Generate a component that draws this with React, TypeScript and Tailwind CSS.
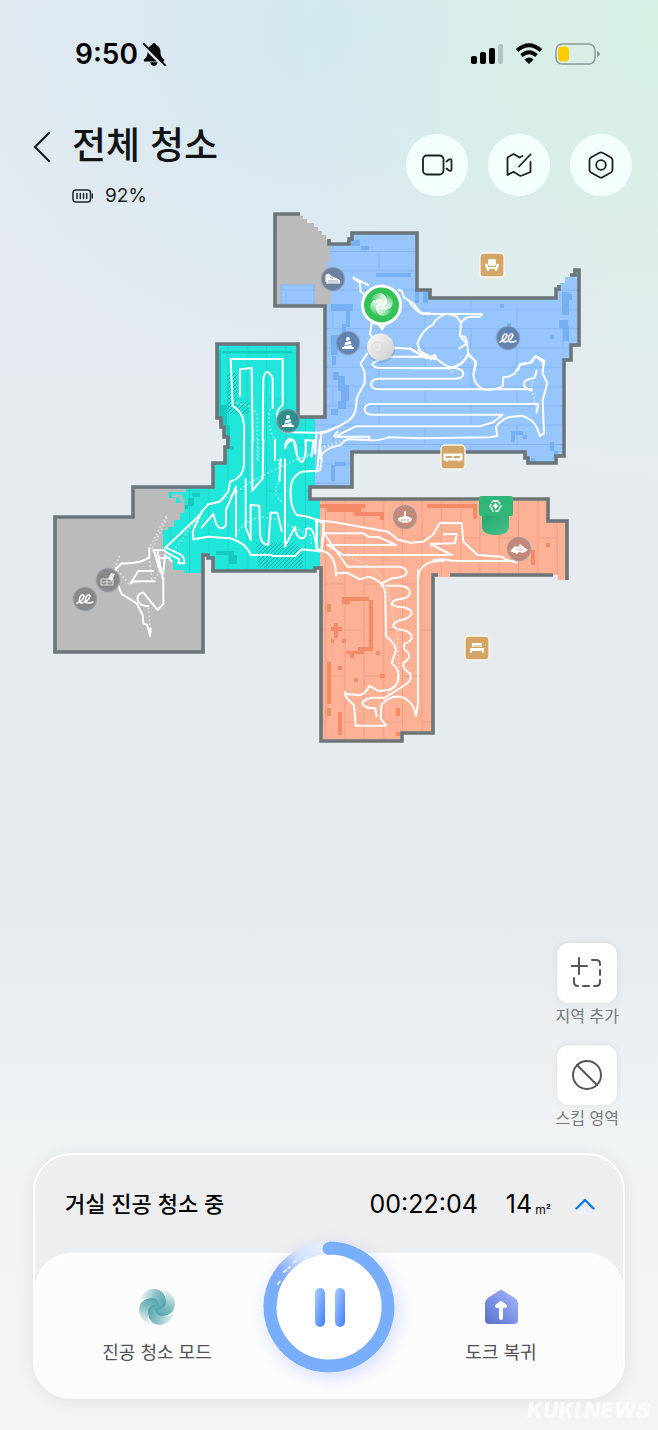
import type { ReactNode } from "react";

type Patch = [x: number, y: number, w: number, h: number];

type Tile = {
  x: number;
  y: number;
  d: string[];
  dots?: string[];
};

const BLUE_ROOM =
  "M325 244H328V240H330V244H349V239H352V233H417V290H429V298H556V289H560V283H565V277H571V275H575V270H579V345H571V360H564V457H556V463H528V458H525V452H352V487H315V417H325V306H327Z";
const GREEN_ROOM =
  "M217 344H298V417H315V487H309V499H320V568H315V571H213V557H208V553H203V573H184V570H173V560H167V551H163V530H168V527H174V520H180V513H184V503H176V498H169V492H186V489H174V487H213V463H225V447H228V437H224V427H221V418H217Z";
const ORANGE_ROOM =
  "M320 498H548V521H567V580H558V575H433V733H402V741H321V568H320Z";

const WALLS = [
  "M300 214H275V306H325V417H298V344H217V418H221V427H224V437H228V447H225V463H213V487H133V517H55V652H203V555H208V558H213V571H315V568H321V741H402V733H433V575H438",
  "M329 239V244H349V239H352V233H417V290H430V298H556V289H559V285",
  "M570 275H575V270H579V345H571V360H564V456H556V463H528V458H525V452H352V487H310V499H548V521H567V580",
  "M450 575H553",
];

const bluePatches: Patch[] = [
  [351, 240, 9, 6], [361, 246, 8, 4], [376, 273, 35, 4], [415, 291, 4, 12], [423, 292, 5, 11],
  [500, 304, 4, 4], [562, 292, 7, 23], [568, 294, 4, 6], [559, 320, 9, 8], [563, 326, 6, 15], [550, 335, 4, 4],
  [331, 304, 22, 7], [346, 311, 4, 16], [342, 324, 4, 18], [331, 335, 7, 20], [333, 372, 6, 8], [338, 376, 7, 15],
  [341, 385, 8, 16], [338, 401, 8, 8], [331, 409, 7, 6], [332, 356, 4, 9], [511, 431, 12, 4], [511, 435, 4, 7], [523, 435, 4, 4],
  [550, 442, 4, 9], [554, 451, 4, 6], [531, 458, 4, 4], [335, 462, 11, 4], [331, 465, 4, 16], [507, 323, 4, 8],
];
const greenPatches: Patch[] = [
  [223, 351, 69, 2], [217, 350, 4, 62], [219, 405, 8, 20], [226, 425, 4, 20], [230, 446, 4, 4],
  [192, 493, 8, 4], [188, 498, 6, 8], [182, 505, 6, 4], [216, 551, 18, 4], [229, 555, 8, 9],
];
const orangePatches: Patch[] = [
  [320, 504, 45, 4], [327, 508, 34, 4], [354, 512, 30, 4], [380, 514, 4, 6], [427, 504, 50, 4], [473, 508, 4, 11],
  [531, 550, 4, 15], [546, 543, 4, 4], [342, 597, 27, 4], [342, 600, 8, 4], [369, 600, 4, 51], [358, 647, 15, 4],
  [346, 651, 18, 3], [350, 654, 4, 4], [331, 627, 11, 4], [334, 623, 4, 15], [331, 639, 3, 4], [342, 639, 4, 4],
  [327, 604, 4, 8], [376, 651, 4, 4], [338, 666, 4, 4], [327, 662, 4, 42], [354, 678, 4, 4], [380, 674, 5, 4],
  [327, 708, 4, 8], [338, 712, 4, 23], [396, 708, 4, 8], [396, 732, 4, 4],
];

// Cleaning route, stored in tiles at three units per map unit
const route: Tile[] = [
  {
    x: 260,
    y: 200,
    d: [
      "M280 233L325 255M280 233L300 250L302 275L315 285M415 270L425 272L432 292L460 310L485 340H510",
      "M335 370L330 402L345 425M400 443L452 446L500 475",
    ],
  },
  {
    x: 410,
    y: 220,
    d: [
      "M0 250Q25 280 40 282H216L210 290H185Q165 290 153 308L150 348L172 375L175 405L198 425L195 450",
      "M153 308L140 290L110 281Q78 292 68 315Q40 325 22 370Q28 395 48 408L80 416Q105 438 125 442L155 430L175 405",
      "M148 385L172 370L165 350L150 348",
      "M0 385L40 410H75M0 411H70L62 418M0 445H125",
      "M325 450L330 432L360 428L377 408L403 423L398 450",
    ],
  },
  {
    x: 320,
    y: 350,
    d: [
      "M275 0L325 24L345 15L348 24M295 0L345 28M205 20H335",
      "M142 10L122 40L134 68V100Q110 140 110 150L107 180Q100 205 80 215Q60 230 40 235Q20 245 0 248",
      "M175 32Q158 35 158 43Q160 53 180 54H405Q430 58 430 70Q430 86 405 86H175Q153 88 153 102Q153 117 175 118H635",
      "M650 187L655 162H155Q134 162 134 178Q134 194 155 194H548L520 217L480 229H107L45 260H148V270",
      "M445 10L467 35L460 75Q465 110 495 120Q530 120 548 108L550 82Q570 82 585 70L600 45L635 37L648 18L670 38L668 70L682 100L668 150L672 250L660 258L652 235Q640 208 605 197L575 200Q550 202 528 230L532 258L510 262L300 265L205 262Q170 274 145 270L80 268L60 286Q10 295 0 325",
      "M650 62L645 82L620 90Q608 97 615 112L635 122",
      "M442 15Q435 40 405 50",
    ],
    dots: ["M650 62L635 105L650 185", "M130 262L70 270L0 292", "M360 35L400 68"],
  },
  {
    x: 200,
    y: 330,
    d: [
      "M92 87H248V225Q230 240 232 255Q230 305 265 307L350 308",
      "M92 87L98 228Q130 245 132 285V330",
      "M120 198V118L155 114L158 330M188 330L190 145Q200 107 218 145V235",
      "M225 390V330M256 355Q255 325 272 326Q288 328 290 365",
      "M318 370V330L340 332L335 380M350 308L345 370M365 305L358 375",
      "M350 308H375Q400 298 420 287M420 318H402L412 305",
    ],
    dots: ["M100 215L130 225Q175 235 172 265V390M210 240Q200 290 225 330", "M310 385Q380 345 420 340"],
  },
  {
    x: 120,
    y: 440,
    d: [
      "M372 0V75Q368 115 330 125L325 155L300 185L265 193L245 215L218 275L220 298L265 290L330 295Q380 310 392 345L450 344L460 348H525L545 328L600 334",
      "M245 220L135 325",
      "M397 0V152L428 115L430 0M465 0V55M482 58L478 122",
      "M495 58V320L525 260Q528 295 548 295Q560 292 558 268Q582 250 590 330",
      "M245 262L280 222L290 255Q305 275 318 255V210L348 140V290",
      "M377 118V262L392 300V195L418 197L420 285Q425 316 445 314L452 218H472L485 273",
      "M497 20Q505 -3 522 3Q530 60 545 66Q560 60 556 0",
      "M600 0L592 92L545 95Q512 110 512 150Q510 200 530 225Q575 230 592 242L590 325L605 332L612 250L590 238",
      "M582 0L585 40M600 20Q610 60 600 90L588 95",
    ],
    dots: [
      "M265 193Q330 175 380 135Q450 90 590 35",
      "M350 280Q385 230 430 232L470 238M475 60L480 120Q450 160 490 190",
      "M505 255L570 285L575 320M415 0V70",
      "M245 215L160 335M140 235L95 330",
    ],
  },
  {
    x: 40,
    y: 500,
    d: [
      "M328 145V172Q300 192 245 190L230 205L212 240L235 258L245 282L290 310L308 345L310 370L322 375L330 408L332 385",
      "M325 318Q300 320 293 300Q290 280 310 278L352 330L370 312V235L340 150L352 150L368 235",
      "M340 213H295L272 250L285 244H345",
      "M378 143L410 158Q435 165 433 190H415L418 178L385 160L370 150H345",
      "M370 220L375 165L395 183M360 175L390 172M345 160L360 215",
    ],
    dots: [
      "M238 170L225 200L265 250L340 240L370 205M328 175L335 235",
      "M325 325L332 400M378 50L330 140",
    ],
  },
  {
    x: 310,
    y: 480,
    d: [
      "M18 120L75 127L235 155L262 178L300 188L340 185L368 165L390 128L455 130L460 185L503 225L575 230L590 240L620 248",
      "M40 160H160L175 170L208 172L258 195H52",
      "M45 165L112 260H270Q292 265 290 280Q285 292 245 295L220 308",
      "M52 195L100 225H425L362 192L435 190L440 162H402",
      "M370 240L400 238L430 243H610M400 243Q325 240 324 300V360",
      "M18 120L22 212L35 212L42 130L18 120M35 212Q78 220 78 288M78 280L110 278L150 298L175 290Q205 295 218 320",
    ],
    dots: ["M115 230Q200 260 225 310L240 360", "M405 165V185M362 200L370 225"],
  },
  {
    x: 310,
    y: 570,
    d: [
      "M215 38Q225 55 226 75L228 198Q255 220 258 240L245 280Q265 295 265 315Q268 350 235 360L205 363L178 348Q165 375 145 375L105 372L110 385L132 405L137 467H228L212 445L215 405Q235 378 270 380Q310 390 318 438L324 400V0M105 366L110 385",
      "M230 47H270Q300 50 300 68Q298 85 265 88Q245 92 246 104Q260 112 280 112Q305 117 305 130Q300 147 265 152Q248 160 250 170Q260 180 280 180Q308 188 305 205Q300 215 285 220Q278 230 285 240Q298 248 298 258Q298 268 280 278Q275 295 300 310Q308 330 285 345L225 383H185Q155 390 158 402Q165 415 195 415L200 438",
    ],
    dots: ["M240 90Q250 150 262 190L268 320", "M250 350L200 420"],
  },
];

function Floor({ id, room, fill, line, vertical, x, y }: {
  id: string;
  room: string;
  fill: string;
  line: string;
  vertical?: boolean;
  x: number;
  y: number;
}) {
  return (
    <>
      <defs>
        <pattern
          id={id}
          x={x}
          y={y}
          width={vertical ? 38.6 : 92}
          height={vertical ? 92 : 38.6}
          patternUnits="userSpaceOnUse"
        >
          <path
            d={vertical ? "M.5 0V92M19.8 0V92M0 1H19M19 47H38" : "M0 .5H92M0 19.8H92M1 0V19M47 19V38"}
            stroke={line}
            fill="none"
          />
        </pattern>
      </defs>
      <path d={room} fill={fill} />
      <path d={room} fill={`url(#${id})`} />
    </>
  );
}

function Patches({ items, fill }: { items: Patch[]; fill: string }) {
  return (
    <g fill={fill}>
      {items.map(([x, y, width, height], i) => (
        <rect key={i} x={x} y={y} width={width} height={height} />
      ))}
    </g>
  );
}

function ObjectPin({ x, y, fill, children }: { x: number; y: number; fill: string; children: ReactNode }) {
  return (
    <g transform={`translate(${x} ${y})`}>
      <circle r="11.5" fill={fill} stroke="#8e98a5" strokeOpacity=".55" strokeWidth="1.6" />
      {children}
    </g>
  );
}

function FurniturePin({ x, y, children }: { x: number; y: number; children: ReactNode }) {
  return (
    <g transform={`translate(${x} ${y})`}>
      <rect x="-12" y="-12" width="24" height="24" rx="4" fill="#d3a566" stroke="#fbf6ec" strokeWidth="1.3" />
      {children}
    </g>
  );
}

const Cable = () => (
  <path
    d="M-8 4Q-2 2-1-3Q-2-6-5-2Q-7 4-3 4Q4 2 5-3Q4-6 1-2Q-1 4 3 4Q6 4 8 3"
    fill="none"
    stroke="#fff"
    strokeWidth="1.5"
    strokeLinecap="round"
  />
);

const Cone = () => (
  <path d="M-1.3-6H1.3L2-3L-2.2-2ZM-2.6-.8L2.5-2L3.3 1L-3.6 2.4ZM-4 3.3L3.6 2L4 4H6V6H-6V4H-4Z" fill="#fff" />
);

function Swirl({ id, color, className }: { id: string; color: string; className?: string }) {
  return (
    <svg viewBox="-20 -20 40 40" className={className} aria-hidden="true">
      <defs>
        <linearGradient id={id} x1="-16" y1="-12" x2="8" y2="-2" gradientUnits="userSpaceOnUse">
          <stop offset="0" stopColor={color} stopOpacity=".12" />
          <stop offset=".5" stopColor={color} stopOpacity=".65" />
          <stop offset="1" stopColor={color} />
        </linearGradient>
      </defs>
      {[0, 90, 180, 270].map((angle) => (
        <path
          key={angle}
          transform={`rotate(${angle})`}
          d="M-15-11C-10-21 9-21 9-5C9 0 4 3 0 2C1-5-4-9-10-9C-13-9-15-8-17-6Z"
          fill={`url(#${id})`}
        />
      ))}
    </svg>
  );
}

function FloorMap() {
  return (
    <svg viewBox="0 210 658 536" className="block h-auto w-full" role="img" aria-label="청소 지도">
      <defs>
        <pattern id="rug" width="4" height="4" patternUnits="userSpaceOnUse">
          <path d="M0 4L4 0" stroke="#0a8f88" strokeWidth=".7" />
        </pattern>
        <linearGradient id="dock" x1="0" y1="0" x2="1" y2="1">
          <stop offset="0" stopColor="#22a86c" />
          <stop offset="1" stopColor="#48c18a" />
        </linearGradient>
        <linearGradient id="robot" x1="0" y1="0" x2="1" y2="1">
          <stop offset="0" stopColor="#fafafa" />
          <stop offset="1" stopColor="#cbcbcb" />
        </linearGradient>
      </defs>

      <path
        d="M275 214H300V216H303V219H307V223H314V227H318V231H322V235H326V240H329V306H275ZM133 487H213V555H203V652H55V517H133Z"
        fill="#babbba"
      />
      <Floor id="wood-blue" room={BLUE_ROOM} fill="#97c6ff" line="#84b5f0" x={378} y={251} />
      <path d="M281 285H314V304H281ZM281 290H314M286 290V304" fill="#97c6ff" stroke="#84b5f0" />
      <path d="M325 240H327V246H330V262H327V270H331V304H325Z" fill="#babbba" />
      <Floor id="wood-green" room={GREEN_ROOM} fill="#20e7da" line="#1ed3c7" vertical x={189} y={490} />
      <Floor id="wood-orange" room={ORANGE_ROOM} fill="#ffb196" line="#ec9f88" vertical x={325} y={583} />
      <path d="M438 573H450V577H438Z" fill="#ffb196" />
      <Patches items={bluePatches} fill="#76aff2" />
      <Patches items={greenPatches} fill="#15c9bf" />
      <Patches items={orangePatches} fill="#f58a69" />
      <path d="M172 496H181V500H183V510H172V515H167" fill="none" stroke="#babbba" strokeWidth="3" />
      <path d="M227 373H237V402H249V414H227ZM256 543H294L303 551V568H258Z" fill="url(#rug)" />

      {WALLS.map((d) => (
        <path key={d} d={d} fill="none" stroke="#6c7579" strokeWidth="3.6" />
      ))}

      {route.map((tile) => (
        <g
          key={`${tile.x}-${tile.y}`}
          transform={`translate(${tile.x} ${tile.y}) scale(.3333)`}
          fill="none"
          stroke="#fff"
          strokeWidth="6"
          strokeLinecap="round"
          strokeLinejoin="round"
        >
          {tile.dots?.map((d) => (
            <path key={d} d={d} strokeDasharray="0 12" opacity=".5" />
          ))}
          {tile.d.map((d) => (
            <path key={d} d={d} />
          ))}
        </g>
      ))}

      <ObjectPin x={333} y={279} fill="#617590d9">
        <path d="M-7-4L-4-5L-1-2L4 0Q7 1 7 3H-7ZM-7 4H7" fill="#fff" stroke="#fff" />
        <path d="M-3-2L0 0M-5 2H5" stroke="#617590" strokeWidth=".7" />
      </ObjectPin>
      <ObjectPin x={348} y={343} fill="#5878a5d9"><Cone /></ObjectPin>
      <ObjectPin x={508} y={338} fill="#5878a5d9"><Cable /></ObjectPin>
      <ObjectPin x={288} y={421} fill="#347e7ed9"><Cone /></ObjectPin>
      <ObjectPin x={85} y={599} fill="#888"><Cable /></ObjectPin>
      <ObjectPin x={108} y={580} fill="#888">
        <path d="M-7-1H5V5H-7ZM-1-1V5M-7 2H5" fill="none" stroke="#ddd" />
        <path d="M0-1L3-7L7-6L4 1Z" fill="#eee" />
      </ObjectPin>
      <ObjectPin x={405} y={517} fill="#bd8474e6">
        <ellipse cy="2.5" rx="7" ry="3.3" fill="#fff" />
        <path d="M0-6V2" stroke="#fff" strokeWidth="2" />
        <path d="M-4 3H4" stroke="#bd8474" strokeWidth="1.2" strokeDasharray="2 1" />
      </ObjectPin>
      <ObjectPin x={519} y={549} fill="#bd8474e6">
        <path d="M-9 2L-4-3L-1-2L1-5L6-1L9 1L4 4L0 3L-2 5Z" fill="#fff" />
        <path d="M-3 0L3 2M0-1L4 1" stroke="#d9b1a7" strokeWidth=".7" />
      </ObjectPin>

      <FurniturePin x={492} y={265}>
        <path d="M-4-1V-4Q-4-6-2-6H2Q4-6 4-4V-1L3 1H-3ZM-7-1Q-5-2-4 0V2H4V0Q5-2 7-1L6 4H5V6H3V4H-3V6H-5V4H-6Z" fill="#fff" />
      </FurniturePin>
      <FurniturePin x={453} y={457}>
        <path d="M-9-3H9V3H-9ZM-6 3V5M6 3V5" fill="#fff" stroke="#fff" />
        <path d="M-7 0H7" stroke="#d3a566" strokeWidth="2" strokeDasharray="6 2" />
      </FurniturePin>
      <FurniturePin x={477} y={648}>
        <path d="M-5-5H5V-1H-5ZM-7 0H7V5H5V3H-5V5H-7Z" fill="#fff" />
        <path d="M-4-2H4" stroke="#d3a566" />
      </FurniturePin>

      <path d="M482 514H509V526Q509 535 495.500 535Q482 535 482 526Z" fill="url(#dock)" />
      <rect x="479" y="496" width="34" height="20" rx="2" fill="#31b679" />
      <path d="M493 501H498L501 506L498 511H493L490 506Z" fill="none" stroke="#fff" strokeWidth="1.4" strokeDasharray="9 1.500" />
      <path d="M495.500 502.500L497 505L499 506L497 507L495.500 509.500L494 507L492 506L494 505Z" fill="#fff" />

      <circle cx="381" cy="349" r="14" fill="#5d7da0" opacity=".28" />
      <circle cx="380.500" cy="347" r="13.500" fill="url(#robot)" />
      <circle cx="377" cy="347" r="5" fill="#e7e7e7" stroke="#d0d0d0" strokeWidth=".6" />
      <path d="M377 324L382 331L387 324Z" fill="#fff" />
      <circle cx="381.500" cy="305" r="19" fill="#32c257" stroke="#fff" strokeWidth="3" />
      <g transform="translate(369 292)">
        <svg width="25" height="25">
          <Swirl id="pin-swirl" color="#fff" />
        </svg>
      </g>
    </svg>
  );
}

function StatusBar() {
  return (
    <div className="flex h-[106px] items-start justify-between pt-9 pr-[58px] pl-[75px] text-black">
      <div className="flex h-9 items-center gap-1">
        <span className="text-[28px] leading-9 font-semibold">9:50</span>
        <svg viewBox="0 0 26 26" className="size-6" aria-hidden="true">
          <path d="M13 1Q15 1 15 3Q20 5 20 11Q20 16 24 19V21H2V19Q6 16 6 11Q6 5 11 3Q11 1 13 1ZM9 22H17Q16 26 13 26Q10 26 9 22Z" />
          <path d="M0 3L23 26" stroke="#d8e8f0" strokeWidth="3" />
          <path d="M2 2L25 25" stroke="#000" strokeWidth="2" strokeLinecap="round" />
        </svg>
      </div>
      <div className="flex h-9 items-center gap-3">
        <svg viewBox="0 0 33 22" className="h-[22px] w-[33px]" aria-hidden="true">
          <rect x="1" y="13" width="6" height="8" rx="2" />
          <rect x="10" y="9" width="6" height="12" rx="2" />
          <rect x="19" y="5" width="6" height="16" rx="2" />
          <rect x="28" y="1" width="5" height="20" rx="2" fill="#b3c2c2" />
        </svg>
        <svg viewBox="0 0 28 22" className="h-[22px] w-7" aria-hidden="true">
          <path d="M2 7.500Q14-3 26 7.500M6.500 12.500Q14 6 21.500 12.500" fill="none" stroke="#000" strokeWidth="3.800" />
          <path d="M9.500 16.500Q14 12.500 18.500 16.500L14 21Z" />
        </svg>
        <svg viewBox="0 0 45 22" className="h-[22px] w-[45px]" aria-hidden="true">
          <rect x="1" y="1" width="39" height="20" rx="6" fill="none" stroke="#8b9b9a" strokeWidth="1.500" />
          <rect x="3" y="3.500" width="11" height="15" rx="4" fill="#ffcc02" />
          <path d="M42 8Q45 9 45 11Q45 13 42 14Z" fill="#8b9b9a" />
        </svg>
      </div>
    </div>
  );
}

function RoundButton({ label, children }: { label: string; children: ReactNode }) {
  return (
    <button type="button" aria-label={label} className="flex size-[62px] items-center justify-center rounded-full bg-[#f2fffd]">
      <svg
        viewBox="0 0 32 32"
        className="size-8"
        fill="none"
        stroke="#1b2021"
        strokeWidth="1.800"
        strokeLinecap="round"
        strokeLinejoin="round"
        aria-hidden="true"
      >
        {children}
      </svg>
    </button>
  );
}

function Header() {
  return (
    <header className="flex items-start justify-between pr-[26px] pl-7">
      <div className="flex items-start gap-4 pt-4">
        <button type="button" aria-label="뒤로" className="flex h-[50px] w-7 items-center justify-center">
          <svg viewBox="0 0 18 32" className="h-8 w-[18px]" fill="none" stroke="#1a1c1e" strokeWidth="2.200" strokeLinecap="round" aria-hidden="true">
            <path d="M16 2L2 16L16 30" />
          </svg>
        </button>
        <div>
          <h1 className="text-[37px] leading-[48px] font-medium text-[#121416]">전체 청소</h1>
          <div className="mt-3 flex items-center gap-3">
            <svg viewBox="0 0 21 14" className="h-[14px] w-[21px]" fill="none" stroke="#222629" strokeWidth="1.500" strokeLinecap="round" aria-hidden="true">
              <rect x="1" y="1" width="17.500" height="12" rx="3" />
              <path d="M5 4.500V9.500M8.300 4.500V9.500M11.500 4.500V9.500M14.700 4.500V9.500M20.300 5V9" />
            </svg>
            <span className="text-[19px] leading-7 text-[#1c1f22]">92%</span>
          </div>
        </div>
      </div>
      <div className="flex gap-5 pt-7">
        <RoundButton label="카메라">
          <rect x="2" y="6.500" width="20.500" height="19" rx="4" />
          <path d="M25.500 12.500L28 10.500Q30.500 9.500 30.500 12V20Q30.500 22.500 28 21.500L25.500 19.500" />
        </RoundButton>
        <RoundButton label="지도 편집">
          <path d="M19.500 7L16.500 8.500L12 5.700Q10.500 4.800 9 5.800L4.500 8.500V26L10.500 22.800L16 26.300Q17.500 27.200 19 26.500L27.500 23V13M27.500 5.500L16 17.500" />
        </RoundButton>
        <RoundButton label="설정">
          <path d="M14.500 3.800Q16 3 17.500 3.800L26 8.500Q27.500 9.500 27.500 11V21Q27.500 22.500 26 23.500L17.500 28.200Q16 29 14.500 28.200L6 23.500Q4.500 22.500 4.500 21V11Q4.500 9.500 6 8.500Z" />
          <circle cx="16" cy="16" r="4.800" />
        </RoundButton>
      </div>
    </header>
  );
}

function ToolButton({ label, children }: { label: string; children: ReactNode }) {
  return (
    <button type="button" className="flex flex-col items-center text-base leading-[26px] text-[#77797c]">
      <span className="flex size-[60px] items-center justify-center rounded-xl bg-white shadow-[0_0_6px_rgba(90,110,130,0.12)]">
        <svg viewBox="0 0 32 32" className="size-8" fill="none" stroke="#55565b" strokeWidth="2" strokeLinecap="round" aria-hidden="true">
          {children}
        </svg>
      </span>
      {label}
    </button>
  );
}

function ControlPanel() {
  return (
    <section className="mx-[33px] rounded-[38px] border-2 border-white bg-[#edeeef] shadow-[0_2px_16px_rgba(60,70,80,0.1)]">
      <div className="flex h-[98px] items-center justify-between pr-7 pl-[30px] text-black">
        <h2 className="text-[22px] leading-8 font-medium">거실 진공 청소 중</h2>
        <div className="flex items-center">
          <time className="text-[25px] leading-8">00:22:04</time>
          <span className="ml-7 text-[25px] leading-8">14</span>
          <span className="mt-3 ml-[3px] text-xs">m²</span>
          <button type="button" aria-label="펼치기" className="ml-6">
            <svg viewBox="0 0 20 12" className="h-3 w-5" fill="none" stroke="#087cff" strokeWidth="2.400" strokeLinecap="round" strokeLinejoin="round" aria-hidden="true">
              <path d="M1.500 10.500L10 2L18.500 10.500" />
            </svg>
          </button>
        </div>
      </div>
      <div className="grid h-36 grid-cols-3 rounded-[36px] bg-[#fcfcfd] px-9 shadow-[inset_0_2px_0_#ffffff]">
        <button type="button" className="flex flex-col items-center pt-[34px] text-[18px] leading-7 text-[#505257]">
          <Swirl id="mode-swirl" color="#55a5ad" className="size-10" />
          <span className="mt-3 whitespace-nowrap">진공 청소 모드</span>
        </button>
        <button type="button" aria-label="일시정지" className="-mt-3 size-[132px] justify-self-center rounded-full shadow-[3px_5px_16px_rgba(80,120,255,0.22)]">
          <svg viewBox="0 0 132 132" className="size-full" aria-hidden="true">
            <defs>
              <linearGradient id="bar" x1="0" y1="0" x2="1" y2="1">
                <stop offset="0" stopColor="#a9cdff" />
                <stop offset="1" stopColor="#3f7dff" />
              </linearGradient>
              <linearGradient id="tail" x1="13" y1="53" x2="60" y2="8" gradientUnits="userSpaceOnUse">
                <stop offset="0" stopColor="#79aefc" />
                <stop offset=".3" stopColor="#86abff" />
                <stop offset=".65" stopColor="#d4e0fb" />
                <stop offset="1" stopColor="#e6edfa" />
              </linearGradient>
            </defs>
            <circle cx="66" cy="66" r="54" fill="#fff" />
            <path d="M7 66A59 59 0 0 1 66 7" fill="none" stroke="url(#tail)" strokeWidth="13" />
            <path d="M66 7A59 59 0 1 1 8.500 53" fill="none" stroke="#79aefc" strokeWidth="13" />
            <circle cx="66" cy="7.500" r="6.500" fill="#79aefc" />
            <path d="M15 43L18 39M21 31L27 26M31 21L36 18M42 17L46 14" stroke="#e3f1ff" strokeWidth="2" strokeLinecap="round" strokeDasharray="3 3" />
            <rect x="52" y="47" width="10" height="39" rx="5" fill="url(#bar)" />
            <rect x="72" y="47" width="10" height="39" rx="5" fill="url(#bar)" />
          </svg>
        </button>
        <button type="button" className="flex flex-col items-center pt-[34px] text-[18px] leading-7 text-[#505257]">
          <svg viewBox="0 0 40 40" className="size-10" aria-hidden="true">
            <defs>
              <linearGradient id="home" x1="1" y1="0" x2="0" y2="1">
                <stop offset="0" stopColor="#a6b8ff" />
                <stop offset="1" stopColor="#5870cb" />
              </linearGradient>
            </defs>
            <path d="M17.500 4Q20 2 22.500 4L34 11Q37 13 37 16V33Q37 37 33 37H8Q4 37 4 33V16Q4 13 7 11Z" fill="url(#home)" />
            <path d="M20 31V18M16 19L20 16L24 19Z" fill="none" stroke="#fff" strokeWidth="4" strokeLinecap="round" strokeLinejoin="round" />
          </svg>
          <span className="mt-3 whitespace-nowrap">도크 복귀</span>
        </button>
      </div>
    </section>
  );
}

export default function App() {
  return (
    <main className="flex min-h-screen flex-col bg-[radial-gradient(ellipse_55%_32%_at_100%_2%,#d7f0e3_0%,rgba(216,240,228,0)_100%),radial-gradient(ellipse_65%_26%_at_50%_2%,#d2e8f0_0%,rgba(211,232,240,0)_100%),linear-gradient(180deg,#e6eaf2_0%,#e6ebf0_30%,#e6ebef_65%,#eff3f4_79%,#f3f3f4_88%,#f4f4f4_100%)] font-[Inter,'Noto_Sans_CJK_KR',sans-serif]">
      <StatusBar />
      <Header />
      <FloorMap />
      <div className="mt-auto mb-[22px] flex flex-col items-end gap-4 pt-8 pr-[39px]">
        <ToolButton label="지역 추가">
          <path d="M8 1V17M0 9H16M3 21V25Q3 29 7 29M12 29H18M23 29H25Q29 29 29 25V23M29 18V13M29 8V7Q29 3 25 3H21" />
        </ToolButton>
        <ToolButton label="스킵 영역">
          <circle cx="16" cy="16" r="14" />
          <path d="M6 6L26 26" />
        </ToolButton>
      </div>
      <ControlPanel />
      <footer className="flex h-[31px] items-start justify-end pr-2 text-[21px] leading-6 font-black text-white/70 italic">
        KUKI NEWS
      </footer>
    </main>
  );
}
